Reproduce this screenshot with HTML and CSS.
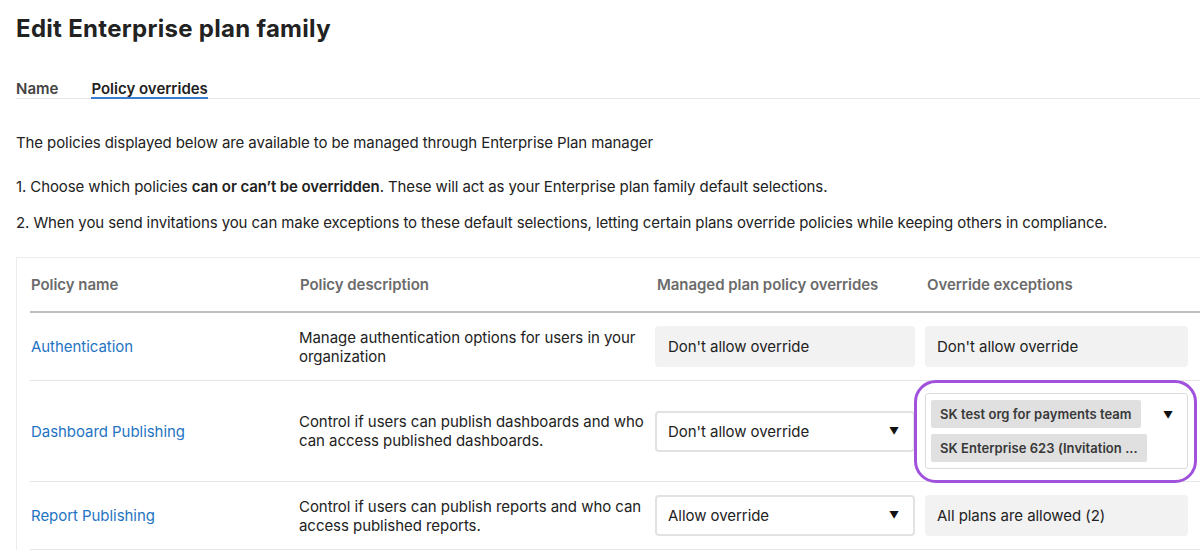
FILE: index.html
```html
<!DOCTYPE html>
<html lang="en">
  <head>
    <meta charset="UTF-8" />
    <title>Edit Enterprise plan family</title>
    <link rel="stylesheet" href="styles.css">
  </head>
  <body>
    <div class="page">
      <h1>Edit Enterprise plan family</h1>

      <!-- Tabs -->
      <div class="tabs">
        <span class="tab">Name</span>
        <span class="tab active">Policy overrides</span>
      </div>

      <p class="intro">The policies displayed below are available to be managed through Enterprise Plan manager</p>
      <p class="step first">1. Choose which policies <strong>can or can’t be overridden</strong>. These will act as your Enterprise plan family default selections.</p>
      <p class="step">2. When you send invitations you can make exceptions to these default selections, letting certain plans override policies while keeping others in compliance.</p>

      <!-- Policy table -->
      <div class="table">
        <div class="row head">
          <div class="cell">Policy name</div>
          <div class="cell">Policy description</div>
          <div class="cell">Managed plan policy overrides</div>
          <div class="cell">Override exceptions</div>
        </div>

        <div class="row">
          <div class="cell"><a class="policy-link" href="#">Authentication</a></div>
          <div class="cell desc">Manage authentication options for users in your organization</div>
          <div class="cell"><div class="box">Don't allow override</div></div>
          <div class="cell"><div class="box">Don't allow override</div></div>
        </div>

        <div class="row tall">
          <div class="cell"><a class="policy-link" href="#">Dashboard Publishing</a></div>
          <div class="cell desc">Control if users can publish dashboards and who can access published dashboards.</div>
          <div class="cell">
            <div class="box select">Don't allow override <span class="caret">&#9660;</span></div>
          </div>
          <div class="cell exceptions">
            <div class="multi">
              <div class="chips">
                <span class="chip">SK test org for payments team</span>
                <span class="chip">SK Enterprise 623 (Invitation ...</span>
              </div>
              <span class="caret">&#9660;</span>
            </div>
            <div class="highlight"></div>
          </div>
        </div>

        <div class="row">
          <div class="cell"><a class="policy-link" href="#">Report Publishing</a></div>
          <div class="cell desc">Control if users can publish reports and who can access published reports.</div>
          <div class="cell">
            <div class="box select">Allow override <span class="caret">&#9660;</span></div>
          </div>
          <div class="cell"><div class="box">All plans are allowed (2)</div></div>
        </div>
      </div>
    </div>
  </body>
</html>
```

FILE: styles.css
```css
:root {
  --text: #222;
  --muted: #6b6b6b;
  --link: #1f74c4;
  --line: #e6e6e6;
  --box-bg: #f2f2f2;
  --purple: #a052dc;
}

* {
  box-sizing: border-box;
}

html {
  overflow: hidden;
}

body {
  margin: 0;
  font-family: Inter, "Noto Sans", sans-serif;
  color: var(--text);
  background: #fff;
}

.page {
  padding: 14px 0 0 16px;
  width: 1240px;
}

h1 {
  margin: 0;
  font-size: 24px;
  font-weight: 700;
  line-height: 30px;
  letter-spacing: 0.3px;
}

.tabs {
  display: flex;
  gap: 33px;
  margin-top: 37px;
  border-bottom: 1px solid var(--line);
}

.tab {
  font-size: 15px;
  font-weight: 600;
  color: #444;
  line-height: 16px;
}

.tab.active {
  color: var(--text);
  border-bottom: 2px solid #3a7bd5;
  margin-bottom: -1px;
}

p {
  margin: 0;
  font-size: 15px;
  line-height: 20px;
  letter-spacing: -0.1px;
}

.intro {
  margin-top: 34px;
}

.step {
  margin-top: 16px;
}

.step.first {
  margin-top: 24px;
}

.step strong {
  font-weight: 600;
}

.table {
  margin-top: 24px;
  border: 1px solid #ececec;
  padding: 0 13px;
}

.row {
  display: grid;
  grid-template-columns: 269px 356px 270px 263px;
  align-items: center;
  border-bottom: 1px solid var(--line);
  min-height: 68px;
}

.row.head {
  min-height: 55px;
  border-bottom: 2px solid #bdbdbd;
  font-weight: 600;
  color: var(--muted);
  font-size: 15px;
}

.row.tall {
  min-height: 101px;
}

.cell {
  font-size: 15px;
  line-height: 19px;
  letter-spacing: -0.05px;
}

.head .cell {
  padding-left: 1px;
}

.head .cell:nth-child(3),
.head .cell:nth-child(4) {
  padding-left: 2px;
}

.policy-link {
  color: var(--link);
  text-decoration: none;
  padding-left: 1px;
}

.desc {
  padding-right: 6px;
}

.box {
  width: 260px;
  height: 41px;
  display: flex;
  align-items: center;
  justify-content: space-between;
  padding: 0 12px 0 13px;
  background: var(--box-bg);
  border-radius: 4px;
}

.cell:last-child .box {
  width: 263px;
  padding-left: 12px;
}

.box.select {
  background: #fff;
  border: 2px solid #e2e2e2;
  padding-left: 11px;
  padding-right: 14px;
}

.caret {
  font-size: 10px;
  color: #111;
}

.exceptions {
  position: relative;
}

.multi {
  width: 263px;
  border: 1px solid #dcdcdc;
  border-radius: 3px;
  padding: 6px 14px 6px 5px;
  display: flex;
  justify-content: space-between;
  align-items: flex-start;
}

.multi .caret {
  margin-top: 6px;
}

.chips {
  display: flex;
  flex-direction: column;
  align-items: flex-start;
  gap: 6px;
}

.chip {
  background: #e0e0e0;
  border-radius: 2px;
  height: 28px;
  line-height: 28px;
  padding: 0 9px;
  font-size: 13px;
  font-weight: 600;
  color: #383838;
  white-space: nowrap;
  letter-spacing: 0.05px;
}

/* annotation ring drawn over the exceptions cell */
.highlight {
  position: absolute;
  left: -11px;
  right: -9px;
  top: -13px;
  bottom: -14px;
  border: 3px solid var(--purple);
  border-radius: 22px;
  pointer-events: none;
}
```
